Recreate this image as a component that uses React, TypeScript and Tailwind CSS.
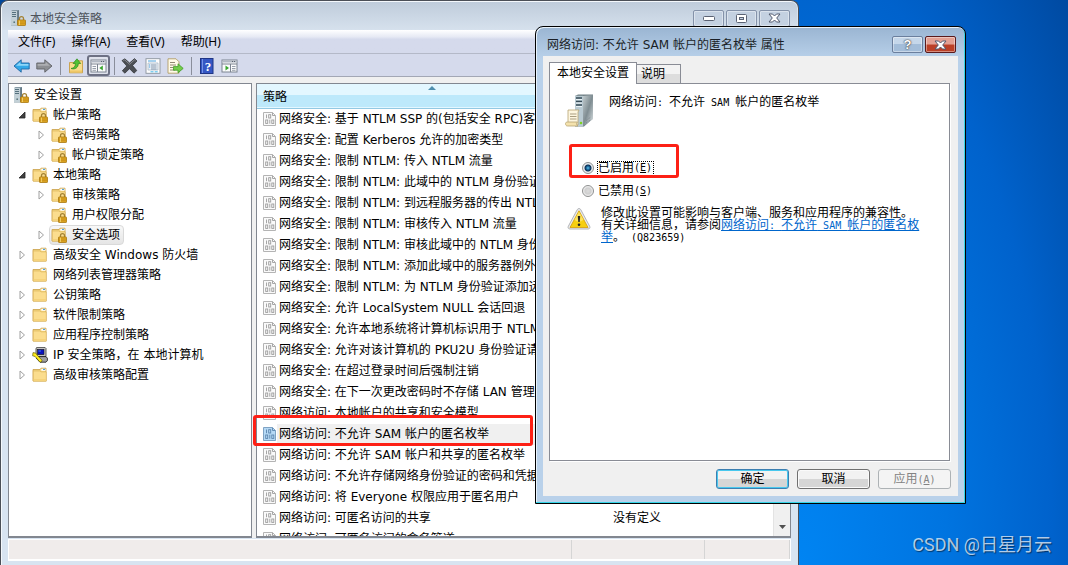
import React, { useState } from 'react';
import clsx from 'clsx';

type NodeIcon = 'server' | 'locked' | 'folder' | 'ipsec';

interface TreeNode {
  label: string;
  level: 0 | 1 | 2;
  icon: NodeIcon;
  state?: 'open' | 'closed';
  selected?: boolean;
}

const treeNodes: TreeNode[] = [
  { label: '安全设置', level: 0, icon: 'server' },
  { label: '帐户策略', level: 1, icon: 'locked', state: 'open' },
  { label: '密码策略', level: 2, icon: 'locked', state: 'closed' },
  { label: '帐户锁定策略', level: 2, icon: 'locked', state: 'closed' },
  { label: '本地策略', level: 1, icon: 'locked', state: 'open' },
  { label: '审核策略', level: 2, icon: 'locked', state: 'closed' },
  { label: '用户权限分配', level: 2, icon: 'locked' },
  { label: '安全选项', level: 2, icon: 'locked', state: 'closed', selected: true },
  { label: '高级安全 Windows 防火墙', level: 1, icon: 'folder', state: 'closed' },
  { label: '网络列表管理器策略', level: 1, icon: 'folder' },
  { label: '公钥策略', level: 1, icon: 'folder', state: 'closed' },
  { label: '软件限制策略', level: 1, icon: 'folder', state: 'closed' },
  { label: '应用程序控制策略', level: 1, icon: 'folder', state: 'closed' },
  { label: 'IP 安全策略，在 本地计算机', level: 1, icon: 'ipsec', state: 'closed' },
  { label: '高级审核策略配置', level: 1, icon: 'folder', state: 'closed' },
];

const policies: { name: string; value?: string }[] = [
  { name: '网络安全: 基于 NTLM SSP 的(包括安全 RPC)客户' },
  { name: '网络安全: 配置 Kerberos 允许的加密类型' },
  { name: '网络安全: 限制 NTLM: 传入 NTLM 流量' },
  { name: '网络安全: 限制 NTLM: 此域中的 NTLM 身份验证' },
  { name: '网络安全: 限制 NTLM: 到远程服务器的传出 NTLM' },
  { name: '网络安全: 限制 NTLM: 审核传入 NTLM 流量' },
  { name: '网络安全: 限制 NTLM: 审核此域中的 NTLM 身份' },
  { name: '网络安全: 限制 NTLM: 添加此域中的服务器例外' },
  { name: '网络安全: 限制 NTLM: 为 NTLM 身份验证添加远' },
  { name: '网络安全: 允许 LocalSystem NULL 会话回退' },
  { name: '网络安全: 允许本地系统将计算机标识用于 NTLM' },
  { name: '网络安全: 允许对该计算机的 PKU2U 身份验证请求' },
  { name: '网络安全: 在超过登录时间后强制注销' },
  { name: '网络安全: 在下一次更改密码时不存储 LAN 管理器' },
  { name: '网络访问: 本地帐户的共享和安全模型' },
  { name: '网络访问: 不允许 SAM 帐户的匿名枚举' },
  { name: '网络访问: 不允许 SAM 帐户和共享的匿名枚举' },
  { name: '网络访问: 不允许存储网络身份验证的密码和凭据' },
  { name: '网络访问: 将 Everyone 权限应用于匿名用户' },
  { name: '网络访问: 可匿名访问的共享', value: '没有定义' },
  { name: '网络访问: 可匿名访问的命名管道' },
];

const SELECTED_POLICY = 15;

const Padlock: React.FC = () => (
  <g>
    <path d="M9.5 10.5V8.6a2 2 0 0 1 4 0v1.9" fill="none" stroke="#a38234" strokeWidth="1.3" />
    <rect x="7.5" y="10" width="8" height="5.5" rx="0.6" fill="#e3ab24" stroke="#a87710" strokeWidth="0.8" />
    <path d="M8 12h7M8 13.8h7" stroke="#b98312" strokeWidth="0.7" />
    <path d="M9.5 10.6v4.4" stroke="#f8d878" strokeWidth="0.8" />
  </g>
);

const ServerLockIcon: React.FC = () => (
  <svg width="16" height="16" viewBox="0 0 16 16" className="shrink-0">
    <path d="M1 1l1.5-1H9v14l-1.5 1.5H1z" fill="#8599a4" />
    <path d="M1 1h6v14.2H1z" fill="#c2d0d6" />
    <path d="M2 2.5h4M2 4.5h4M2 6.5h4" stroke="#56717e" strokeWidth="1" />
    <path d="M7.2 1L9 .3v13L7.2 15z" fill="#667b87" />
    <circle cx="4.2" cy="12.2" r="0.9" fill="#5f7a80" />
    <Padlock />
  </svg>
);

const FolderIcon: React.FC<{ locked?: boolean }> = ({ locked = false }) => (
  <svg width="16" height="16" viewBox="0 0 16 16" className="shrink-0">
    <path d="M1 2.5h7l1-1.3h5V14H1z" fill="#f3d37c" stroke="#c9a04a" strokeWidth="0.8" />
    <path d="M9.3 1.8h4.2v2H9.3z" fill="#fff" />
    <path d="M11 2.4h2" stroke="#3d95d6" strokeWidth="1" />
    <path d="M1.3 4h6.5l1.2.9h5.3v9.3h-13z" fill="#fbdd8e" stroke="#d9b15a" strokeWidth="0.6" />
    <path d="M1.8 12h12.2v1.8H1.8z" fill="#f5d27b" />
    {locked && <Padlock />}
  </svg>
);

const IpsecIcon: React.FC = () => (
  <svg width="16" height="16" viewBox="0 0 16 16" className="shrink-0">
    <path d="M4 1.2l1-.8h8l1 1v8.2H4z" fill="#c4c4c4" stroke="#333" strokeWidth="0.8" />
    <rect x="5.5" y="2.4" width="6.5" height="5.2" fill="#0a12c0" stroke="#111" strokeWidth="0.6" />
    <path d="M6.5 4h2.5" stroke="#4fa0ff" strokeWidth="0.8" />
    <path d="M4 11l2-1.4h8l1.4 1.6v2.4l-1.4 1.6H8z" fill="#a0a0a0" stroke="#111" strokeWidth="0.8" />
    <path d="M1 5.6l2.8.5L5 8l5 5.2-.6 1.8H7.8L3 9.4.6 8.8z" fill="#ffee1c" stroke="#514a00" strokeWidth="0.6" />
  </svg>
);

const PolicyIcon: React.FC<{ active?: boolean }> = ({ active = false }) => (
  <svg width="14" height="16" viewBox="0 0 14 16" className="shrink-0">
    <path
      d="M.5 1.5h9l3 3v10H.5z"
      fill={active ? '#b5d9f5' : '#fafafa'}
      stroke={active ? '#7fa3c4' : '#b4b4b4'}
    />
    <g fill="none" stroke={active ? '#5a84ad' : '#9c9c9c'} strokeWidth="0.9">
      <path d="M3.5 3.5v3.7" />
      <rect x="5.7" y="3.7" width="2" height="3.3" />
      <rect x="2.7" y="9" width="2" height="3.4" />
      <path d="M6.8 8.7v4" />
      <rect x="8.8" y="9" width="2" height="3.4" />
      <path d="M9.5 1.7v2.8h2.8" />
    </g>
  </svg>
);

const ArrowIcon: React.FC<{ forward?: boolean }> = ({ forward = false }) => (
  <svg width="17" height="16" viewBox="0 0 17 16">
    {forward ? (
      <>
        <path d="M.8 5h8V1.8L16 8l-7.2 6.2V11h-8z" fill="#8d8f93" stroke="#606266" strokeWidth="0.9" />
        <path d="M1.6 6h8V4l4.4 3.7H1.6z" fill="#adafb2" />
      </>
    ) : (
      <>
        <path d="M16.2 5h-8V1.8L1 8l7.2 6.2V11h8z" fill="#33a8e8" stroke="#2167a3" strokeWidth="0.9" />
        <path d="M15.4 6h-8V4L3 7.7h12.4z" fill="#8ed6f8" />
      </>
    )}
  </svg>
);

const FolderUpIcon: React.FC = () => (
  <svg width="16" height="16" viewBox="0 0 16 16">
    <path d="M1.5 4.5h6l1-1.7h6v12h-13z" fill="#f8dc8b" stroke="#c79d45" strokeWidth="0.9" />
    <path d="M2 12.5h12v2H2z" fill="#efc766" />
    <path d="M3 10.5c3.2-.3 4.4-2.2 4.4-5H5L9 .8l3.7 4.7h-2.4c0 4-3 6.4-7.3 5z" fill="#52c234" stroke="#2d8a1d" strokeWidth="0.7" />
  </svg>
);

const PaneIcon: React.FC<{ right?: boolean }> = ({ right = false }) => (
  <svg width="17" height="16" viewBox="0 0 17 16">
    <rect x="1" y="2" width="15" height="12" fill="#fafbfc" stroke="#7c8490" />
    <path d="M1.5 3.5h14" stroke="#b3bac4" strokeWidth="2" />
    <path d="M11 3.5h1M13 3.5h1" stroke="#59616d" />
    <path d="M1 6h15" stroke="#7c8490" />
    {right ? (
      <>
        <path d="M9.5 6v8" stroke="#7c8490" />
        <path d="M4.5 7.5v5L8 10z" fill="#38a62c" />
        <path d="M11 8.5h3.5M11 10.5h3.5M11 12.3h3.5" stroke="#8c94a0" strokeWidth="0.9" />
      </>
    ) : (
      <>
        <path d="M7.5 6v8" stroke="#7c8490" />
        <path d="M12.8 7.5v5L9.3 10z" fill="#38a62c" />
        <path d="M2.5 8.5H6M2.5 10.5H6M2.5 12.3H6" stroke="#8c94a0" strokeWidth="0.9" />
      </>
    )}
  </svg>
);

const DeleteIcon: React.FC = () => (
  <svg width="17" height="16" viewBox="0 0 17 16">
    <path d="M1 2.6L3.8.8 8.6 5 13.5.6 16 3l-4.4 4.6 4.2 5L13 15.2l-4.5-4.5-4.6 4.5-2.6-2.4L5.8 8z" fill="#4c4f54" stroke="#2e3034" strokeWidth="0.7" />
    <path d="M2.3 2.7l1.4-.8 4.9 4.3 4.9-4.3 1 .9" fill="none" stroke="#8d9095" strokeWidth="0.9" />
  </svg>
);

const PropertiesIcon: React.FC = () => (
  <svg width="16" height="16" viewBox="0 0 16 16">
    <rect x="1" y="0.7" width="14" height="14.6" fill="#fdfdfe" stroke="#8a929c" strokeWidth="0.9" />
    <path d="M3 3h8" stroke="#4ca4dd" />
    <path d="M3 5h10v7H3z" fill="#eaf1f7" stroke="#a3b1c0" strokeWidth="0.7" />
    <path d="M6 7h5.5M6 9h5.5M6 11h5.5" stroke="#6f8499" strokeWidth="0.8" />
    <path d="M4.2 7h1M4.2 9h1" stroke="#2b8ed8" />
    <path d="M5.5 13.8h3M9.7 13.8h3" stroke="#46b8e8" />
  </svg>
);

const ExportIcon: React.FC = () => (
  <svg width="17" height="16" viewBox="0 0 17 16">
    <path d="M1 .8h8l3 3v11.4H1z" fill="#fffbe8" stroke="#b19c66" strokeWidth="0.9" />
    <path d="M3 4.5h5M3 7h6M3 9.5h3M3 12h5" stroke="#857c63" strokeWidth="0.9" />
    <path d="M6.5 8.6H11V5.8l5.2 4.6-5.2 4.4v-2.6H6.5z" fill="#74cd4a" stroke="#3f9a26" strokeWidth="0.8" />
  </svg>
);

const HelpIcon: React.FC = () => (
  <svg width="16" height="16" viewBox="0 0 16 16">
    <rect x="1.5" y="0.5" width="12.5" height="15" fill="#3557c4" stroke="#1f3585" />
    <path d="M3.5 1v14" stroke="#7593e6" />
    <text x="8.9" y="12.6" textAnchor="middle" fontSize="13" fontWeight="700" fill="#fff" fontFamily="Liberation Serif, serif">
      ?
    </text>
  </svg>
);

const BigServerIcon: React.FC = () => (
  <svg width="30" height="34" viewBox="0 0 30 34" className="shrink-0">
    <defs>
      <linearGradient id="tower" x1="0" y1="0" x2="1" y2="1">
        <stop offset="0" stopColor="#c3cccf" />
        <stop offset="0.5" stopColor="#7f8d92" />
        <stop offset="1" stopColor="#dfe5e7" />
      </linearGradient>
    </defs>
    <path d="M10 2l3-1.5h15L27.5 25 19 32.5h-9z" fill="#718086" />
    <path d="M18 2l10-1v24l-10 7.5z" fill="url(#tower)" />
    <path d="M10 1.8h8v30.7h-8z" fill="#b9cad2" />
    <path d="M11 4h6M11 7.5h6M11 11h6" stroke="#364b57" strokeWidth="1.5" />
    <path d="M11 5.5h6M11 9h6M11 12.5h6" stroke="#e9f1f4" strokeWidth="1" />
    <circle cx="16" cy="29" r="1.3" fill="#7ed321" />
    <path d="M21 26.500l5-3.500M21 29l5-3.500" stroke="#798489" strokeWidth="0.9" strokeDasharray="1 1" />
    <path d="M3 16h11l-1 2v13H2l1-2.500z" fill="#fdf6df" stroke="#b6a371" strokeWidth="0.8" />
    <path d="M5 20h6.500M5 22.500h6.500M5 25h6.500" stroke="#a99d80" strokeWidth="1" />
    <path d="M0.500 29.500c0-1 1-1.500 2-1.500h10c-1.500 1-1 3.500.5 4H2.500c-1.400 0-2-1.200-2-2.500z" fill="#f4e2ad" stroke="#b6a371" strokeWidth="0.8" />
  </svg>
);

const WarningIcon: React.FC = () => (
  <svg width="24" height="22" viewBox="0 0 24 22" className="mt-px shrink-0">
    <path d="M10.3 1.5c.8-1.300 2.600-1.300 3.400 0l9 16.800c.7 1.400-.1 2.700-1.600 2.700H2.900c-1.500 0-2.300-1.300-1.600-2.700z" fill="#e9eaec" stroke="#a2a5aa" strokeWidth="0.8" />
    <path d="M12 2.800l9 16.700H3z" fill="#f6cf10" stroke="#d39b06" strokeWidth="0.8" />
    <path d="M12 3.500l4.500 8.200c-3 2.600-6.500 2.400-9 0z" fill="#fce35c" />
    <path d="M10.800 8h2.400l-.5 6h-1.400z" fill="#222" />
    <circle cx="12" cy="16.800" r="1.3" fill="#222" />
  </svg>
);

const nodeIcons: Record<NodeIcon, React.ReactNode> = {
  server: <ServerLockIcon />,
  locked: <FolderIcon locked />,
  folder: <FolderIcon />,
  ipsec: <IpsecIcon />,
};

const levelPadding = ['pl-0.5', 'pl-[5px]', 'pl-6'];

const Expander: React.FC<{ state?: 'open' | 'closed' }> = ({ state }) => (
  <span className="flex w-4 shrink-0 items-center justify-center">
    {state && (
      <svg width="8" height="10" viewBox="0 0 8 10">
        {state === 'open' ? (
          <path d="M7 2v6H1z" fill="#404040" stroke="#262626" strokeWidth="0.8" />
        ) : (
          <path d="M2 1l4.500 4L2 9z" fill="#fff" stroke="#a0a0a0" />
        )}
      </svg>
    )}
  </span>
);

const TreeRow: React.FC<{ node: TreeNode }> = ({ node }) => (
  <li className={clsx('flex h-5 items-center', levelPadding[node.level])}>
    {node.level > 0 && <Expander state={node.state} />}
    <span
      className={clsx(
        'flex h-5 items-center gap-[5px] rounded-sm border pl-px pr-[3px] whitespace-nowrap',
        node.selected ? 'border-[#d9d9d9] bg-linear-to-b from-[#f8f8f8] to-[#e5e5e5]' : 'border-transparent'
      )}
    >
      {nodeIcons[node.icon]}
      {node.label}
    </span>
  </li>
);

const ToolButton: React.FC<{ label: string; pressed?: boolean; children: React.ReactNode }> = ({
  label,
  pressed = false,
  children,
}) => (
  <button
    aria-label={label}
    className={clsx(
      'flex h-[21px] w-[23px] items-center justify-center',
      pressed && 'rounded-[3px] border-2 border-[#6d7184] bg-[#dfe2ec]'
    )}
  >
    {children}
  </button>
);

const ToolSeparator: React.FC = () => (
  <span className="flex w-2 justify-center">
    <span className="h-[18px] w-px bg-[#8a8e9b]" />
  </span>
);

const CaptionButton: React.FC<{ label: string; tone: 'idle' | 'glass' | 'close'; children: React.ReactNode }> = ({
  label,
  tone,
  children,
}) => (
  <button
    aria-label={label}
    className={clsx(
      'flex h-[17px] w-[31px] items-center justify-center rounded-[2px] border shadow-[inset_0_0_0_1px_rgba(255,255,255,0.4)]',
      tone === 'idle' && 'border-[#8492a9] bg-[#c4d1e1]',
      tone === 'glass' && 'border-[#6b7f9d] bg-linear-to-b from-[#c5d7ea] from-50% to-[#a3bdd9] to-50%',
      tone === 'close' && 'border-[#5a1a1c] bg-linear-to-b from-[#e3a093] from-45% to-[#bb4027] to-55%'
    )}
  >
    {children}
  </button>
);

const CloseGlyph: React.FC = () => (
  <svg width="13" height="10" viewBox="0 0 13 10">
    <path d="M1 1h3.500l2 2 2-2H12L8.700 5 12 9H8.500l-2-2-2 2H1l3.300-4z" fill="#fff" stroke="#525a6e" />
  </svg>
);

// Half-width run: every Latin cell is half of a Chinese one
const Half: React.FC<{ children: React.ReactNode }> = ({ children }) => (
  <span className="font-['DejaVu_Sans_Mono',monospace] text-[10px] leading-none whitespace-pre">{children}</span>
);

const MainWindow: React.FC = () => (
  <section className="absolute inset-y-0 left-0 flex w-[799px] flex-col overflow-hidden rounded-t-lg border border-b-0 border-[#4b4f57] bg-[#d8e4f1] px-[7px] pb-1 shadow-[inset_1px_1px_0_#f4f8fc]">
    <header className="-mx-[6px] mt-px flex h-7 shrink-0 items-center gap-1 rounded-t-md bg-linear-to-b from-[#bfccdb] to-[#d6e1ed] pl-2 pr-[7px]">
      <span className="pt-1">
        <ServerLockIcon />
      </span>
      <h1 className="flex-1 pt-1.5 leading-4 text-[#4d535b]">本地安全策略</h1>
      <div className="flex gap-0.5 pt-1">
        <CaptionButton label="最小化" tone="idle">
          <svg width="12" height="5" viewBox="0 0 12 5">
            <rect x="0.5" y="0.5" width="11" height="4" rx="1" fill="#fff" stroke="#5b6273" />
          </svg>
        </CaptionButton>
        <CaptionButton label="最大化" tone="idle">
          <svg width="11" height="9" viewBox="0 0 11 9">
            <rect x="0.5" y="0.5" width="10" height="8" rx="1" fill="#fff" stroke="#5b6273" />
            <rect x="3.5" y="3.5" width="4" height="2" fill="#c4d1e1" stroke="#5b6273" />
          </svg>
        </CaptionButton>
        <CaptionButton label="关闭" tone="idle">
          <CloseGlyph />
        </CaptionButton>
      </div>
    </header>

    <nav className="flex h-6 shrink-0 items-center border-b border-[#b4b9c8] bg-linear-to-b from-white via-[#e6e9f4] via-30% to-[#d5daec] to-40% pl-0.5 font-['Noto_Sans','Noto_Sans_CJK_SC',sans-serif]">
      {['文件(F)', '操作(A)', '查看(V)', '帮助(H)'].map((item) => (
        <button key={item} className="px-2 leading-4">
          {item}
        </button>
      ))}
    </nav>

    <div className="flex h-[23px] shrink-0 items-center border-b border-[#a3a7b5] bg-[#d5daec] pl-0.5 pt-px">
      <ToolButton label="后退"><ArrowIcon /></ToolButton>
      <ToolButton label="前进"><ArrowIcon forward /></ToolButton>
      <ToolSeparator />
      <ToolButton label="上一级"><FolderUpIcon /></ToolButton>
      <ToolButton label="控制台树" pressed><PaneIcon /></ToolButton>
      <ToolSeparator />
      <ToolButton label="删除"><DeleteIcon /></ToolButton>
      <ToolButton label="属性"><PropertiesIcon /></ToolButton>
      <ToolButton label="导出列表"><ExportIcon /></ToolButton>
      <ToolSeparator />
      <ToolButton label="帮助"><HelpIcon /></ToolButton>
      <ToolButton label="操作窗格"><PaneIcon right /></ToolButton>
    </div>

    <div className="flex min-h-0 flex-1 gap-1 bg-[#f0f0f0] pt-1.5">
      <ul className="w-[244px] shrink-0 overflow-hidden border border-b-2 border-[#828790] bg-white pt-px">
        {treeNodes.map((node) => (
          <TreeRow key={node.label} node={node} />
        ))}
      </ul>

      <div className="flex min-w-0 flex-1 overflow-hidden border border-b-2 border-[#828790] bg-white">
        <table className="w-full table-fixed self-start text-left">
          <thead>
            <tr className="h-6 border-b border-[#93c9e3] bg-linear-to-b from-[#e3f7ff] from-50% to-[#bde9fb] to-50%">
              <th className="relative w-[349px] pl-1.5 pt-[3px] font-normal leading-4">
                策略
                <svg width="8" height="4" viewBox="0 0 8 4" className="absolute left-1/2 top-0.5 -translate-x-1/2">
                  <path d="M4 0l4 4H0z" fill="#4f8fae" />
                </svg>
              </th>
              <th />
            </tr>
          </thead>
          <tbody>
            {policies.map((policy, index) => (
              <tr key={policy.name} className="h-[21px]">
                <td className="overflow-hidden p-0">
                  <div className="flex h-[21px] items-center pl-1.5">
                    <PolicyIcon active={index === SELECTED_POLICY} />
                    <span
                      className={clsx(
                        'flex-1 pl-0.5 leading-[21px] whitespace-nowrap',
                        index === SELECTED_POLICY && 'bg-[#f0f0f0]'
                      )}
                    >
                      {policy.name}
                    </span>
                  </div>
                </td>
                <td className="p-0 pl-[7px] leading-[21px]">{policy.value}</td>
              </tr>
            ))}
          </tbody>
        </table>
        <div className="flex w-[17px] shrink-0 items-end justify-center border-l border-[#e3e3e3] bg-[#f0f0f0] pb-[7px]">
          <svg width="7" height="4" viewBox="0 0 7 4">
            <path d="M0 0h7L3.500 4z" fill="#505050" />
          </svg>
        </div>
      </div>
    </div>

    <footer className="mt-px flex h-[22px] shrink-0 border border-b-2 border-white bg-[#f0eceb]">
      <span className="flex-1 border-r border-[#d5d5d5]" />
      <span className="w-[133px] border-r border-[#d5d5d5]" />
      <span className="w-[85px] border-r border-[#d5d5d5]" />
    </footer>
  </section>
);

const Radio: React.FC<{ id: string; checked: boolean; onSelect: () => void }> = ({ id, checked, onSelect }) => (
  <input
    type="radio"
    id={id}
    name="policy-state"
    checked={checked}
    onChange={onSelect}
    className={clsx(
      'size-3 appearance-none rounded-full border border-[#8e8f8f]',
      checked
        ? 'bg-[radial-gradient(circle_at_50%_50%,#59c3ec_0,#14568a_2px,#0e2f52_3px,#e8ecef_4px)]'
        : 'bg-[radial-gradient(circle_at_50%_50%,#dcdcdc_0,#cfcfcf_3px,#f4f4f4_5px)]'
    )}
  />
);

const PropertiesDialog: React.FC = () => {
  const [enabled, setEnabled] = useState(true);

  return (
    <section
      role="dialog"
      aria-labelledby="dialog-title"
      className="absolute left-[535px] top-[26px] flex h-[478px] w-[431px] flex-col rounded-t-lg border border-black bg-linear-to-b from-[#9ab5d2] to-[#b9d1ea] to-[32px] px-[7px] pb-[7px] shadow-[inset_-1px_-1px_0_#35d5e8,inset_1px_1px_0_#e8f2fb]"
    >
      <header className="flex h-[29px] shrink-0 items-center pl-1 pr-0.5">
        <h2 id="dialog-title" className="flex-1 pt-1.5 leading-4 text-[#1b1f26]">
          网络访问: 不允许 SAM 帐户的匿名枚举 属性
        </h2>
        <div className="flex gap-0.5 pt-1.5">
          <CaptionButton label="帮助" tone="glass">
            <span className="font-['Liberation_Sans',sans-serif] text-[13px] font-bold leading-4 text-white [text-shadow:0_0_1px_#333,0_0_2px_#333]">?</span>
          </CaptionButton>
          <CaptionButton label="关闭" tone="close">
            <CloseGlyph />
          </CaptionButton>
        </div>
      </header>

      <div className="flex min-h-0 flex-1 flex-col bg-[#f0f0f0] pb-[7px] pl-1.5 pr-[7px] pt-1.5">
        <div role="tablist" className="flex items-end">
          <button
            role="tab"
            aria-selected="true"
            className="relative z-10 -mb-px h-[22px] border border-b-0 border-[#898c95] bg-white px-[7px] pb-0.5 leading-4"
          >
            本地安全设置
          </button>
          <button
            role="tab"
            aria-selected="false"
            className="h-[19px] border border-b-0 border-l-0 border-[#898c95] bg-linear-to-b from-[#f3f3f3] from-50% to-[#dddddd] to-50% pl-1 pr-[15px] leading-4"
          >
            说明
          </button>
        </div>

        <div className="mr-px flex-1 border border-[#898c95] bg-white pl-[15px] pt-2.5 shadow-[1px_1px_0_#fff]">
          <div className="flex gap-[14px]">
            <BigServerIcon />
            <p className="leading-4">
              网络访问<Half>: </Half>不允许<Half> SAM </Half>帐户的匿名枚举
            </p>
          </div>

          <div className="mt-8 flex h-4 items-center gap-[3px] pl-[17px]">
            <Radio id="state-enabled" checked={enabled} onSelect={() => setEnabled(true)} />
            <label htmlFor="state-enabled" className="flex h-[15px] items-center border border-dotted border-black pr-px">
              已启用<Half>(<u>E</u>)</Half>
            </label>
          </div>
          <div className="mt-[7px] flex h-4 items-center gap-[3px] pl-[17px]">
            <Radio id="state-disabled" checked={!enabled} onSelect={() => setEnabled(false)} />
            <label htmlFor="state-disabled" className="flex h-[15px] items-center border border-transparent pr-px">
              已禁用<Half>(<u>S</u>)</Half>
            </label>
          </div>

          <div className="mt-2 flex gap-2.5 pl-0.5">
            <WarningIcon />
            <p className="w-[324px] leading-3">
              修改此设置可能影响与客户端、服务和应用程序的兼容性。
              <br />
              有关详细信息，请参阅
              <a href="#Q823659" className="text-[#0066cc] underline">
                网络访问<Half>: </Half>不允许<Half> SAM </Half>帐户的匿名枚举
              </a>
              。<Half> (Q823659)</Half>
            </p>
          </div>
        </div>

        <div className="mt-2 flex justify-end gap-2">
          <button className="h-5 w-[73px] rounded-[3px] border border-[#3c7fb1] bg-linear-to-b from-[#f2f2f2] from-50% to-[#d6d6d6] to-50% leading-4 shadow-[inset_0_0_0_1px_#48c8ee]">
            确定
          </button>
          <button className="h-5 w-[73px] rounded-[3px] border border-[#707070] bg-linear-to-b from-[#f2f2f2] from-50% to-[#d6d6d6] to-50% leading-4 shadow-[inset_0_0_0_1px_#fafafa]">
            取消
          </button>
          <button disabled className="h-5 w-[73px] rounded-[3px] border border-[#adb2b5] bg-[#f4f4f4] leading-4 text-[#838383]">
            应用<Half>(<u>A</u>)</Half>
          </button>
        </div>
      </div>
    </section>
  );
};

const App: React.FC = () => {
  return (
    <main className="relative h-screen overflow-hidden bg-[radial-gradient(420px_1000px_at_75%_100%,#0084f2_0%,#0074e0_35%,#0062cc_60%,#00479c_88%)] font-['DejaVu_Sans','Noto_Sans_CJK_SC',sans-serif] text-xs text-black">
      <MainWindow />
      <PropertiesDialog />

      {/* Highlights */}
      <div className="pointer-events-none absolute left-[253px] top-[415px] h-[31px] w-[280px] rounded-[3px] border-3 border-[#fd2015]" />
      <div className="pointer-events-none absolute left-[569px] top-36 h-[34px] w-[110px] rounded-[3px] border-3 border-[#fd2015]" />

      <p className="absolute bottom-2 right-4 font-['Roboto','Noto_Sans_CJK_SC',sans-serif] text-lg leading-6 text-white/70 [text-shadow:1px_1px_1px_rgba(0,0,0,0.5)]">
        CSDN @日星月云
      </p>
    </main>
  );
};

export default App;
